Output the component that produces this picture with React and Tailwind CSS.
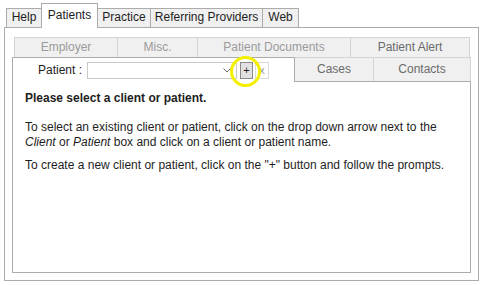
import React from 'react';

const TopTab = ({ label, selected, className = '' }) => (
    <div
        className={
            selected
                ? `relative z-10 -mb-px -ml-px h-[25px] whitespace-nowrap border border-b-0 border-[#acacac] bg-white pt-[4px] text-center text-[#1e1e1e] ${className}`
                : `-ml-px h-[19px] whitespace-nowrap border border-b-0 border-[#acacac] bg-[#f0f0f0] pt-[1px] text-center text-[#1e1e1e] ${className}`
        }
    >
        {label}
    </div>
);

const SubTab = ({ label, width, muted }) => (
    <div
        className={`-ml-px flex h-full items-center justify-center whitespace-nowrap border border-[#d4d4d4] bg-[#f0f0f0] ${muted ? 'text-[#9b9b9b]' : 'text-[#6b6b6b]'}`}
        style={{ width }}
    >
        {label}
    </div>
);

export default function App() {
    return (
        <div className="relative h-[285px] w-[481px] overflow-hidden bg-white font-['Segoe_UI','Liberation_Sans',Arial,sans-serif] text-[12px] leading-[15px]">
            {/* Main tabs */}
            <div className="flex h-[27px] items-end pl-[7px]">
                <TopTab label="Help" className="w-[36px]" />
                <TopTab label="Patients" selected className="w-[57px]" />
                <TopTab label="Practice" className="w-[54px]" />
                <TopTab label="Referring Providers" className="w-[113px]" />
                <TopTab label="Web" className="w-[37px]" />
            </div>

            {/* Outer panel */}
            <div className="ml-[4px] h-[254px] w-[475px] border border-[#acacac] pl-[7px] pt-[9px]">
                {/* Back row of sub tabs */}
                <div className="ml-[3px] flex h-[21px]">
                    <SubTab label="Employer" width={104} muted />
                    <SubTab label="Misc." width={81} muted />
                    <SubTab label="Patient Documents" width={154} muted />
                    <SubTab label="Patient Alert" width={120} />
                </div>

                {/* Front row */}
                <div className="relative z-10 -mt-[2px] flex h-[25px] items-end">
                    <div className="relative z-10 -mb-px flex h-[25px] w-[283px] items-center border border-b-0 border-[#acacac] bg-white pl-[25px]">
                        <span className="w-[49px] whitespace-nowrap text-[#1e1e1e]">Patient :</span>
                        <div className="flex h-[17px] w-[150px] items-center justify-end border border-[#c9c9c9] bg-white pr-[5px]">
                            <svg width="8" height="5" viewBox="0 0 8 5">
                                <path d="M0.5 0.5 L4 4 L7.5 0.5" fill="none" stroke="#6b6b6b" strokeWidth="1" />
                            </svg>
                        </div>
                        <div className="ml-[3px] flex h-[17px] w-[13px] items-center justify-center border border-[#8a8a8a] bg-[#e1e1e1] text-[11px] text-[#1e1e1e]">
                            +
                        </div>
                        <div className="ml-[2px] flex h-[17px] w-[14px] items-center justify-center border border-[#dadada] text-[11px] text-[#9b9b9b]">
                            x
                        </div>
                        {/* highlight ring */}
                        <div className="absolute left-[217px] top-[-2px] h-[31px] w-[31px] rounded-full border-[3px] border-[#f4f000]" />
                    </div>
                    <div className="-ml-px flex h-[24px] w-[80px] items-center justify-center border border-b-0 border-[#d4d4d4] bg-[#f0f0f0] text-[#6b6b6b]">
                        Cases
                    </div>
                    <div className="-ml-px flex h-[24px] w-[98px] items-center justify-center border border-b-0 border-[#d4d4d4] bg-[#f0f0f0] text-[#6b6b6b]">
                        Contacts
                    </div>
                </div>

                {/* Content panel */}
                <div className="h-[192px] w-[459px] border border-[#acacac] bg-white px-[12px] pt-[9px] text-[#1e1e1e]">
                    <p className="font-bold">Please select a client or patient.</p>
                    <p className="mt-[14px]">
                        To select an existing client or patient, click on the drop down arrow next to the{' '}
                        <i>Client</i> or <i>Patient</i> box and click on a client or patient name.
                    </p>
                    <p className="mt-[8px]">
                        To create a new client or patient, click on the "+" button and follow the prompts.
                    </p>
                </div>
            </div>
        </div>
    );
}
